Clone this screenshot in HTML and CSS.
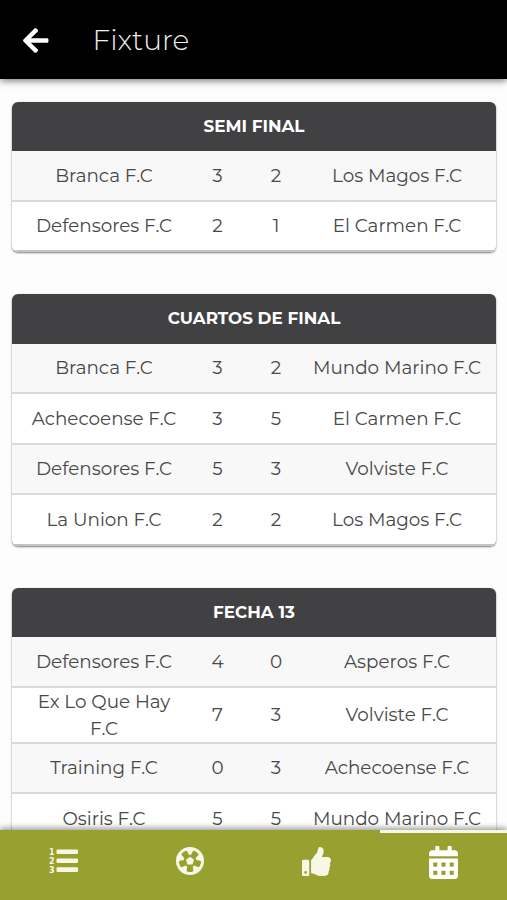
FILE: index.html
```html
<!DOCTYPE html>
<html lang="es">
<head>
    <meta charset="UTF-8">
    <meta name="viewport" content="width=device-width, initial-scale=1.0">
    <title>Fixture</title>
    <link rel="stylesheet" href="styles.css">
</head>
<body>
    <header class="topbar">
        <svg class="back" viewBox="0 0 448 512"><path d="M257.5 445.1l-22.2 22.2c-9.4 9.4-24.6 9.4-33.9 0L7 273c-9.4-9.4-9.4-24.6 0-33.9L201.4 44.7c9.4-9.4 24.6-9.4 33.9 0l22.2 22.2c9.5 9.5 9.3 25-.4 34.3L136.6 216H424c13.3 0 24 10.7 24 24v32c0 13.3-10.7 24-24 24H136.6l120.5 114.8c9.8 9.3 10 24.8.4 34.3z"/></svg>
        <h1>Fixture</h1>
    </header>

    <main class="content">
        <section class="card">
            <h2>SEMI FINAL</h2>
            <div class="match"><span>Branca F.C</span><span>3</span><span>2</span><span>Los Magos F.C</span></div>
            <div class="match"><span>Defensores F.C</span><span>2</span><span>1</span><span>El Carmen F.C</span></div>
        </section>

        <section class="card">
            <h2>CUARTOS DE FINAL</h2>
            <div class="match"><span>Branca F.C</span><span>3</span><span>2</span><span>Mundo Marino F.C</span></div>
            <div class="match"><span>Achecoense F.C</span><span>3</span><span>5</span><span>El Carmen F.C</span></div>
            <div class="match"><span>Defensores F.C</span><span>5</span><span>3</span><span>Volviste F.C</span></div>
            <div class="match"><span>La Union F.C</span><span>2</span><span>2</span><span>Los Magos F.C</span></div>
        </section>

        <section class="card">
            <h2>FECHA 13</h2>
            <div class="match"><span>Defensores F.C</span><span>4</span><span>0</span><span>Asperos F.C</span></div>
            <div class="match"><span>Ex Lo Que Hay F.C</span><span>7</span><span>3</span><span>Volviste F.C</span></div>
            <div class="match"><span>Training F.C</span><span>0</span><span>3</span><span>Achecoense F.C</span></div>
            <div class="match"><span>Osiris F.C</span><span>5</span><span>5</span><span>Mundo Marino F.C</span></div>
        </section>
    </main>

    <nav class="tabs">
        <a class="tab">
            <svg class="icon-list" viewBox="0 0 30 28">
                <rect x="8.500" y="2.500" width="21.500" height="4.600" rx="1"/>
                <rect x="8.500" y="11.500" width="21.500" height="4.600" rx="1"/>
                <rect x="8.500" y="20.300" width="21.500" height="4.600" rx="1"/>
                <text x="1" y="8">1</text>
                <text x="1" y="17">2</text>
                <text x="1" y="26">3</text>
            </svg>
        </a>
        <a class="tab">
            <svg class="icon-ball" viewBox="-14 -14 28 28">
                <circle r="14"/>
                <g class="cut">
                    <circle r="6.200"/>
                    <path d="M-2.600 4h5.200l.8 5.800-1.400 1.200h-4l-1.400-1.200z"/>
                    <path transform="rotate(72)" d="M-2.600 4h5.200l.8 5.800-1.400 1.200h-4l-1.400-1.200z"/>
                    <path transform="rotate(144)" d="M-2.600 4h5.200l.8 5.800-1.400 1.200h-4l-1.400-1.200z"/>
                    <path transform="rotate(216)" d="M-2.600 4h5.200l.8 5.800-1.400 1.200h-4l-1.400-1.200z"/>
                    <path transform="rotate(288)" d="M-2.600 4h5.200l.8 5.800-1.400 1.200h-4l-1.400-1.200z"/>
                </g>
                <path d="M0-4.200l4 2.900-1.500 4.700h-5L-4-1.300z"/>
            </svg>
        </a>
        <a class="tab">
            <svg class="icon-thumb" viewBox="0 0 512 512"><path d="M104 224H24c-13.255 0-24 10.745-24 24v240c0 13.255 10.745 24 24 24h80c13.255 0 24-10.745 24-24V248c0-13.255-10.745-24-24-24zM64 472c-13.255 0-24-10.745-24-24s10.745-24 24-24 24 10.745 24 24-10.745 24-24 24zM384 81.452c0 42.416-25.97 66.208-33.277 94.548h101.723c33.397 0 59.397 27.746 59.553 58.098.084 17.938-7.546 37.249-19.439 49.197l-.11.11c9.836 23.337 8.237 56.037-9.308 79.469 8.681 25.895-.069 57.704-16.382 74.757 4.298 17.598 2.244 32.575-6.148 44.632C440.202 511.587 389.616 512 346.839 512l-2.845-.001c-48.287-.017-87.806-17.598-119.56-31.725-15.957-7.099-36.821-15.887-52.651-16.178-6.54-.12-11.783-5.457-11.783-11.998v-213.77c0-3.2 1.282-6.271 3.558-8.521 39.614-39.144 56.648-80.587 89.117-113.111 14.804-14.832 20.188-37.236 25.393-58.902C282.515 39.293 291.817 0 312 0c24 0 72 8 72 81.452z"/></svg>
        </a>
        <a class="tab active">
            <svg class="icon-calendar" viewBox="0 0 448 512">
                <path d="M0 464c0 26.500 21.500 48 48 48h352c26.500 0 48-21.500 48-48V192H0zM400 64h-48V16c0-8.800-7.200-16-16-16h-32c-8.800 0-16 7.200-16 16v48H160V16c0-8.800-7.200-16-16-16h-32c-8.800 0-16 7.200-16 16v48H48C21.500 64 0 85.500 0 112v48h448v-48c0-26.500-21.500-48-48-48z"/>
                <g class="cut">
                    <rect x="64" y="256" width="64" height="64" rx="12"/>
                    <rect x="192" y="256" width="64" height="64" rx="12"/>
                    <rect x="320" y="256" width="64" height="64" rx="12"/>
                    <rect x="64" y="384" width="64" height="64" rx="12"/>
                    <rect x="192" y="384" width="64" height="64" rx="12"/>
                    <rect x="320" y="384" width="64" height="64" rx="12"/>
                </g>
            </svg>
        </a>
    </nav>
</body>
</html>
```
FILE: styles.css
```css
* {
    box-sizing: border-box;
}
body {
    margin: 0;
    height: 100vh;
    display: flex;
    flex-direction: column;
    overflow: hidden;
    background-color: #fdfdfd;
    color: #484848;
    font-family: Montserrat, Inter, sans-serif;
}
/* Top bar */
.topbar {
    position: relative;
    z-index: 1;
    flex: none;
    display: flex;
    align-items: center;
    height: 79px;
    padding: 1px 0 0 23px;
    background-color: #000;
    box-shadow: 0 2px 7px rgba(0, 0, 0, 0.5);
}
.back {
    width: 25.5px;
    height: 29px;
    fill: #fff;
}
.topbar h1 {
    margin: 0 0 0 44px;
    font-size: 28px;
    font-weight: 350;
    color: #eee;
}
/* Result tables */
.content {
    flex: 1;
    min-height: 0;
    overflow: hidden;
    padding: 23px 11px 0 12px;
}
.card {
    margin-bottom: 42.3px;
    border-radius: 6px;
    overflow: hidden;
    background-color: #fff;
    box-shadow: 0 1px 2px rgba(0, 0, 0, 0.5);
}
.card h2 {
    margin: 0;
    height: 49.2px;
    line-height: 48px;
    text-align: center;
    font-size: 16.8px;
    font-weight: 700;
    background-color: #414042;
    color: #fff;
}
.match {
    display: grid;
    grid-template-columns: 168px 59px 58px 184px;
    align-items: center;
    min-height: 50.5px;
    padding: 0 7px 0 8px;
    border-bottom: 2px solid #dadada;
    text-align: center;
    font-size: 18.35px;
    line-height: 27px;
}
.match span:first-child {
    padding: 0 8px;
}
.match:nth-child(even) {
    background-color: #f8f8f8;
}
.match:last-child {
    border-bottom-color: #c4c4c4;
}
/* Bottom tabs */
.tabs {
    position: relative;
    z-index: 1;
    flex: none;
    display: grid;
    grid-template-columns: repeat(4, 1fr);
    height: 70px;
    background-color: #98a030;
    box-shadow: 0 -2px 6px rgba(0, 0, 0, 0.4);
}
.tab {
    display: flex;
    justify-content: center;
    align-items: flex-start;
    padding-top: 17px;
    border-top: 0 solid #f7f7e4;
    fill: #f7f7e6;
}
.tab.active {
    padding-top: 13px;
    border-top-width: 3px;
    fill: #fff;
}
.cut {
    fill: #98a030;
}
.icon-list {
    width: 30px;
    height: 28px;
}
.icon-list text {
    font-family: "DejaVu Sans", sans-serif;
    font-size: 8px;
    font-weight: 700;
}
.icon-ball {
    width: 28px;
    height: 28px;
}
.icon-thumb {
    width: 29px;
    height: 29px;
}
.icon-calendar {
    width: 29px;
    height: 33px;
}
```
